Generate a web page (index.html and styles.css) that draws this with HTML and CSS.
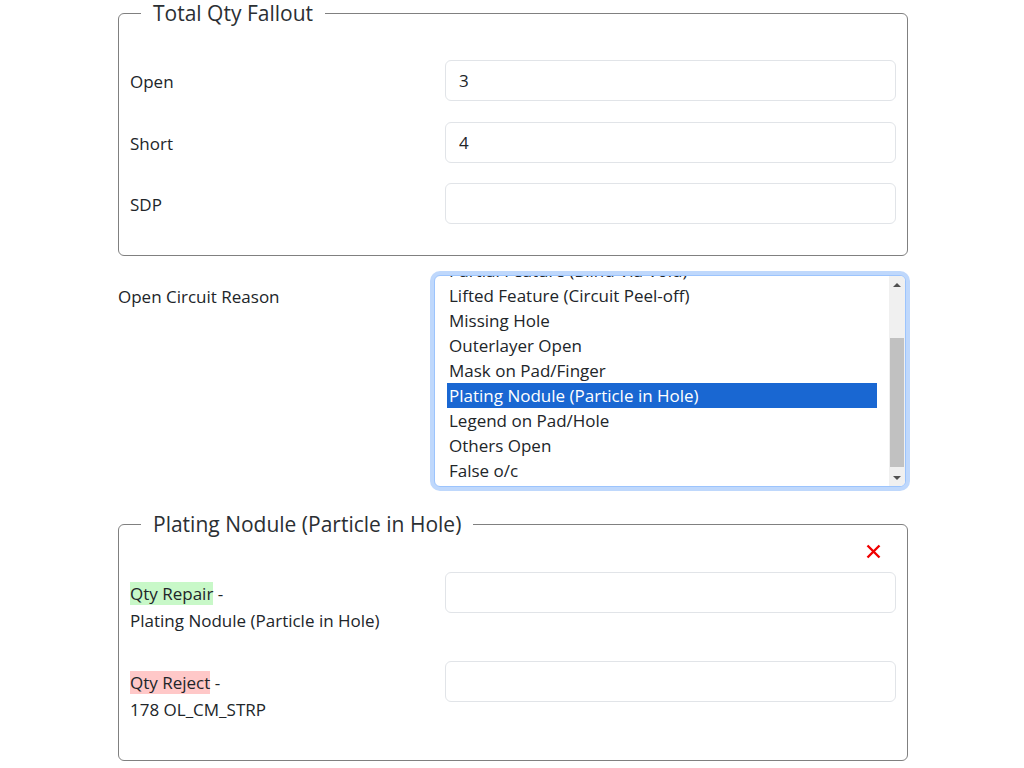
FILE: index.html
```html
<!DOCTYPE html>
<html lang="en">
<head>
<meta charset="utf-8">
<title>Fallout</title>
<link rel="stylesheet" href="styles.css">
</head>
<body>
<div class="page">
  <fieldset class="group group-total">
    <legend class="group-title">Total Qty Fallout</legend>
    <div class="field-row">
      <label class="field-label">Open</label>
      <input class="field-input" type="text" value="3">
    </div>
    <div class="field-row">
      <label class="field-label">Short</label>
      <input class="field-input" type="text" value="4">
    </div>
    <div class="field-row">
      <label class="field-label">SDP</label>
      <input class="field-input" type="text" value="">
    </div>
  </fieldset>

  <div class="reason-row">
    <label class="reason-label">Open Circuit Reason</label>
    <div class="listbox">
      <div class="list-view">
        <ul class="list">
          <li>Partial Feature (Blind Via Void)</li>
          <li>Lifted Feature (Circuit Peel-off)</li>
          <li>Missing Hole</li>
          <li>Outerlayer Open</li>
          <li>Mask on Pad/Finger</li>
          <li class="selected">Plating Nodule (Particle in Hole)</li>
          <li>Legend on Pad/Hole</li>
          <li>Others Open</li>
          <li>False o/c</li>
        </ul>
      </div>
      <div class="scrollbar">
        <div class="sb-btn">
          <svg width="8" height="4" viewBox="0 0 8 4"><path d="M0 4 L4 0 L8 4 Z" fill="#505050"/></svg>
        </div>
        <div class="sb-track"><div class="sb-thumb"></div></div>
        <div class="sb-btn">
          <svg width="8" height="4" viewBox="0 0 8 4"><path d="M0 0 L8 0 L4 4 Z" fill="#505050"/></svg>
        </div>
      </div>
    </div>
  </div>

  <fieldset class="group group-detail">
    <legend class="group-title">Plating Nodule (Particle in Hole)</legend>
    <div class="close-row">
      <svg class="close-icon" width="15" height="15" viewBox="0 0 15 15">
        <path d="M1.5 1.5 L13.5 13.5 M13.5 1.5 L1.5 13.5" stroke="#f00000" stroke-width="2.4" stroke-linecap="butt"/>
      </svg>
    </div>
    <div class="detail-row">
      <label class="detail-label"><span class="mark-repair">Qty Repair</span> -<br>Plating Nodule (Particle in Hole)</label>
      <input class="field-input" type="text" value="">
    </div>
    <div class="detail-row">
      <label class="detail-label"><span class="mark-reject">Qty Reject</span> -<br>178 OL_CM_STRP</label>
      <input class="field-input" type="text" value="">
    </div>
  </fieldset>
</div>
</body>
</html>
```

FILE: styles.css
```css
html, body {
  margin: 0;
  padding: 0;
  background: #ffffff;
}

body {
  font-family: "Open Sans", "Noto Sans", sans-serif;
  font-size: 17px;
  color: #212529;
}

.page {
  width: 790px;
  margin: 0 0 0 calc(50% - 394px);
}

.group {
  margin: 0;
  border: 1px solid #808080;
  border-radius: 6px;
  padding: 34px 11px 31px 11px;
  min-width: 0;
}

.group-title {
  font-size: 21px;
  line-height: 26px;
  margin-left: 11px;
  padding: 0 12px;
  color: #2b2f33;
}

.field-row {
  display: grid;
  grid-template-columns: 315px 1fr;
  align-items: center;
  height: 41px;
  margin-bottom: 20.5px;
}

.field-row:last-child {
  margin-bottom: 0;
}

.field-label {
  line-height: 25px;
  padding-top: 2px;
}

.field-input {
  box-sizing: border-box;
  height: 41px;
  width: 100%;
  border: 1px solid #e1e4e8;
  border-radius: 6px;
  padding: 0 13px;
  font-family: inherit;
  font-size: 17px;
  color: #212529;
  background: #fff;
  outline: none;
}

.reason-row {
  display: grid;
  grid-template-columns: 316px 472px;
  margin-top: 19px;
}

.reason-label {
  padding-top: 9px;
  line-height: 25px;
}

.listbox {
  box-sizing: border-box;
  height: 212px;
  border: 1px solid #9cc4fd;
  border-radius: 6px;
  box-shadow: 0 0 0 4px #bfd8fc;
  display: flex;
  overflow: hidden;
  background: #fff;
}

.list-view {
  flex: 1;
  overflow: hidden;
  padding: 0 12px;
}

.list {
  list-style: none;
  margin: -18px 0 0 0;
  padding: 0;
}

.list li {
  height: 25px;
  line-height: 25px;
  padding: 0 2px;
  white-space: nowrap;
}

.list li.selected {
  background: #1967d2;
  color: #ffffff;
}

.scrollbar {
  width: 16px;
  background: #f0f0f0;
  display: flex;
  flex-direction: column;
}

.sb-btn {
  height: 17px;
  display: flex;
  align-items: center;
  justify-content: center;
}

.sb-track {
  flex: 1;
}

.sb-thumb {
  margin: 45px 1px 0 1px;
  height: 129px;
  background: #c1c1c1;
}

.group-detail {
  margin-top: 24px;
  padding-top: 0;
  padding-bottom: 37px;
}

.close-row {
  display: flex;
  justify-content: flex-end;
  padding: 7px 15px 13px 0;
}

.close-icon {
  display: block;
}

.detail-row {
  display: grid;
  grid-template-columns: 315px 1fr;
  align-items: start;
  margin-bottom: 27px;
}

.detail-row:last-child {
  margin-bottom: 0;
}

.detail-label {
  padding-top: 8px;
  line-height: 27px;
}

.mark-repair {
  background: #c8f8c8;
}

.mark-reject {
  background: #ffc8c8;
}
```
